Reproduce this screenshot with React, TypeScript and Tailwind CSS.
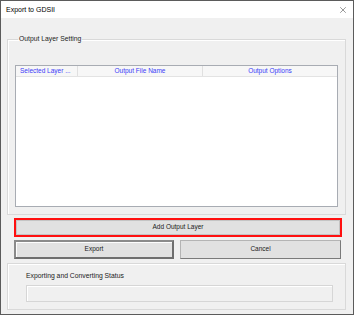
import { X } from "lucide-react";

const Header = ({ label, className }: { label: string; className: string }) => (
	<div
		className={`h-full flex items-center border-r border-[#e0e0e0] text-[#3b3bf7] text-[6.5px] ${className}`}
	>
		{label}
	</div>
);

export default function App() {
	return (
		<div className="w-[354px] h-[324px] bg-white">
			<div className="w-[354px] h-[315px] border border-[#5b5b5b] bg-[#f0f0f0] flex flex-col font-['Liberation_Sans',sans-serif] text-[#1a1a1a]">
				{/* title bar */}
				<div className="h-[17px] bg-white flex items-center justify-between pl-[5px] pr-[5px]">
					<span className="text-[7px] leading-none text-black">Export to GDSII</span>
					<X size={10} strokeWidth={1.2} className="text-[#333]" />
				</div>

				<div className="flex flex-col px-[6px]">
					<fieldset className="mt-[16px] w-[339px] border border-[#d9d9d9] pt-[21px] px-[7px] pb-[7px] shadow-[inset_1px_1px_0_#fff]">
						<legend className="ml-[3px] px-[1px] text-[6.8px] leading-[10px] text-[#222]">
							Output Layer Setting
						</legend>
						<div className="h-[142px] border border-[#a8acb3] bg-white flex flex-col">
							<div className="h-[11px] flex items-center bg-[#f7f7f7] border-b border-[#e3e3e3]">
								<Header label="Selected Layer ..." className="w-[62px] pl-[4px]" />
								<Header label="Output File Name" className="w-[125px] justify-center" />
								<Header label="Output Options" className="flex-1 justify-center border-r-0" />
							</div>
						</div>
					</fieldset>

					<div className="mt-[3px] ml-[7px] w-[328px] h-[19px] border-2 border-[#ff1010]">
						<button className="block w-full h-full bg-[#e1e1e1] border border-[#c4c4c4] text-[6.5px] leading-none">
							Add Output Layer
						</button>
					</div>

					<div className="mt-[3px] ml-[7px] flex gap-[6px]">
						<button className="block w-[160px] h-[19px] bg-[#e1e1e1] border-2 border-[#8a8a8a] border-r-[#6e6e6e] border-b-[#6e6e6e] shadow-[inset_1px_1px_0_#fdfdfd] text-[6.5px] leading-none">
							Export
						</button>
						<button className="block w-[161px] h-[19px] bg-[#e1e1e1] border border-[#b4b4b4] border-r-[#7a7a7a] border-b-[#7a7a7a] text-[6.5px] leading-none">
							Cancel
						</button>
					</div>

					<div className="mt-[4px] w-[339px] h-[47px] border border-[#d9d9d9] shadow-[inset_1px_1px_0_#fff] flex flex-col pl-[18px] pt-[7px]">
						<span className="text-[6.8px] leading-[9px] text-[#222]">
							Exporting and Converting Status
						</span>
						<div className="mt-[5px] w-[307px] h-[17px] border border-[#d6d6d6] shadow-[inset_1px_1px_0_#fff] bg-[#f0f0f0]" />
					</div>
				</div>
			</div>
		</div>
	);
}
